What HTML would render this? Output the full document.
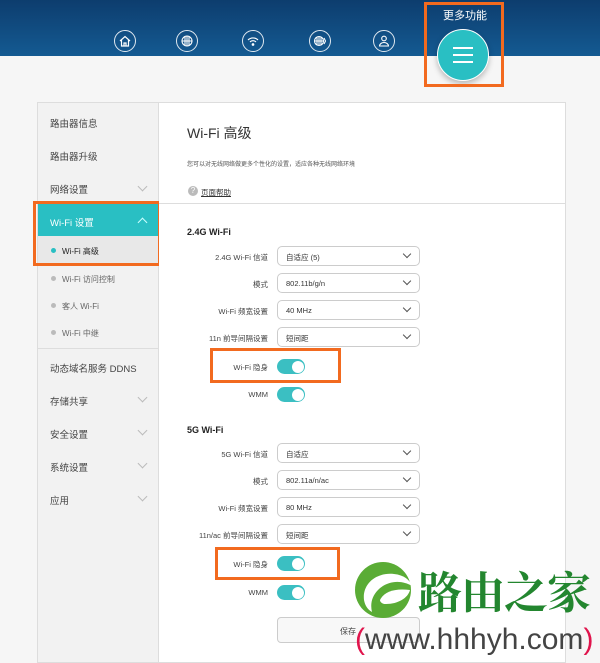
<!DOCTYPE html>
<html><head><meta charset="utf-8"><style>
*{margin:0;padding:0;box-sizing:border-box}
body{width:600px;height:663px;overflow:hidden;background:#f6f6f6;font-family:"Liberation Sans","Noto Sans CJK SC",sans-serif;position:relative;color:#333}
.hdr{position:absolute;left:0;top:0;width:600px;height:56px;background:linear-gradient(#0d3d6e,#145a92)}
.ic{position:absolute;top:30px;width:22px;height:22px;border:1.3px solid #dfe8f0;border-radius:50%}
.ic svg{position:absolute;left:3px;top:3px}
.more{position:absolute;left:443px;top:7px;color:#fff;font-size:11px}
.tc{position:absolute;left:437px;top:29px;width:52px;height:52px;border-radius:50%;background:#29bfc3;border:1.5px solid #fff;box-shadow:0 3px 6px rgba(0,0,0,.25)}
.tc i{position:absolute;left:15px;width:20px;height:2px;background:#fff}
.ob{position:absolute;border:3px solid #f26a1f}
.side{position:absolute;left:37px;top:102px;width:122px;height:561px;background:#f2f2f2;border:1px solid #ddd}
.main{position:absolute;left:159px;top:102px;width:407px;height:561px;background:#fff;border:1px solid #ddd;border-left:none}
.si{position:absolute;left:12px;font-size:9.5px;color:#444}
.chev{position:absolute;left:101px;width:7px;height:7px;border-right:1px solid #bbb;border-bottom:1px solid #bbb;transform:rotate(45deg)}
.sub{position:absolute;left:24px;font-size:8px;color:#666}
.dot{position:absolute;left:13px;width:5px;height:5px;border-radius:50%;background:#bbb}
.lab{position:absolute;right:332px;font-size:7.5px;color:#444;text-align:right;white-space:nowrap}
.sel{position:absolute;left:277px;width:143px;height:20px;border:1px solid #ccc;border-radius:5px;font-size:7.5px;padding:5px 0 0 8px;color:#333}
.sel:after{content:"";position:absolute;right:9px;top:4px;width:5px;height:5px;border-right:1px solid #555;border-bottom:1px solid #555;transform:rotate(45deg)}
.tg{position:absolute;left:277px;width:28px;height:15px;border-radius:8px;background:#3bbfc2}
.tg:after{content:"";position:absolute;right:1.5px;top:1.5px;width:12px;height:12px;border-radius:50%;background:#fff}
.h{position:absolute;left:187px;font-size:9px;font-weight:bold;color:#222}
</style></head><body>
<div class="hdr"></div>
<div class="ic" style="left:114px"><svg width="14" height="14" viewBox="0 0 14 14" fill="none" stroke="#fff" stroke-width="1.2"><path d="M2 7L7 2.5L12 7M3.5 6v6h7V6M6 12V9h2v3"/></svg></div>
<div class="ic" style="left:176px"><svg width="14" height="14" viewBox="0 0 14 14" fill="none" stroke="#fff" stroke-width="1.1"><circle cx="7" cy="7" r="5"/><path d="M2 7h10M7 2v10M5 2.5v9M9 2.5v9"/></svg></div>
<div class="ic" style="left:242px"><svg width="14" height="14" viewBox="0 0 14 14" fill="none" stroke="#fff" stroke-width="1.1"><path d="M2 6a7 7 0 0 1 10 0M4 8a4 4 0 0 1 6 0"/><circle cx="7" cy="10.5" r=".8" fill="#fff"/></svg></div>
<div class="ic" style="left:309px"><svg width="14" height="14" viewBox="0 0 14 14" fill="none" stroke="#fff" stroke-width="1.1"><circle cx="6" cy="7" r="4.5"/><path d="M1.5 7h9M6 2.5v9M4 3v8M8 3v8M11 4l1.5 3-1.5 3"/></svg></div>
<div class="ic" style="left:373px"><svg width="14" height="14" viewBox="0 0 14 14" fill="none" stroke="#fff" stroke-width="1.1"><circle cx="7" cy="4.5" r="2.3"/><path d="M2.5 12a4.5 3.5 0 0 1 9 0z"/></svg></div>
<div class="more">更多功能</div>
<div class="tc"><i style="top:17px"></i><i style="top:24px"></i><i style="top:31px"></i></div>
<div class="ob" style="left:424px;top:2px;width:80px;height:85px"></div>

<div class="side">
<div class="si" style="top:13px">路由器信息</div>
<div class="si" style="top:46px">路由器升级</div>
<div class="si" style="top:79px">网络设置</div><div class="chev" style="top:80px"></div>
<div style="position:absolute;left:0;top:100px;width:120px;height:33px;background:#29bfc3"></div>
<div class="si" style="top:112px;color:#fff">Wi-Fi 设置</div>
<div class="chev" style="top:116px;border-color:#cff;transform:rotate(225deg)"></div>
<div style="position:absolute;left:0;top:133px;width:120px;height:28px;background:#e8e8e8"></div>
<div class="dot" style="top:145px;background:#29bfc3"></div><div class="sub" style="top:143px;color:#222">Wi-Fi 高级</div>
<div class="dot" style="top:173px"></div><div class="sub" style="top:171px">Wi-Fi 访问控制</div>
<div class="dot" style="top:200px"></div><div class="sub" style="top:198px">客人 Wi-Fi</div>
<div class="dot" style="top:227px"></div><div class="sub" style="top:225px">Wi-Fi 中继</div>
<div style="position:absolute;left:0;top:245px;width:120px;height:1px;background:#ddd"></div>
<div class="si" style="top:258px">动态域名服务 DDNS</div>
<div class="si" style="top:291px">存储共享</div><div class="chev" style="top:291px"></div>
<div class="si" style="top:324px">安全设置</div><div class="chev" style="top:324px"></div>
<div class="si" style="top:357px">系统设置</div><div class="chev" style="top:357px"></div>
<div class="si" style="top:390px">应用</div><div class="chev" style="top:390px"></div>
</div>
<div class="ob" style="left:33px;top:201px;width:128px;height:65px"></div>

<div class="main"></div>
<div style="position:absolute;left:187px;top:123px;font-size:14px;color:#333">Wi-Fi 高级</div>
<div style="position:absolute;left:187px;top:159px;font-size:6px;color:#555">您可以对无线网络做更多个性化的设置，适应各种无线网络环境</div>
<div style="position:absolute;left:188px;top:186px;width:10px;height:10px;border-radius:50%;background:#bbb;color:#fff;font-size:8px;text-align:center;line-height:10px">?</div>
<div style="position:absolute;left:201px;top:187px;font-size:7.5px;color:#333;text-decoration:underline">页面帮助</div>
<div style="position:absolute;left:159px;top:203px;width:406px;height:1px;background:#ddd"></div>

<div class="h" style="top:227px">2.4G Wi-Fi</div>
<div class="lab" style="top:252px">2.4G Wi-Fi 信道</div><div class="sel" style="top:246px">自适应 (5)</div>
<div class="lab" style="top:279px">模式</div><div class="sel" style="top:273px">802.11b/g/n</div>
<div class="lab" style="top:306px">Wi-Fi 频宽设置</div><div class="sel" style="top:300px">40 MHz</div>
<div class="lab" style="top:333px">11n 前导间隔设置</div><div class="sel" style="top:327px">短间距</div>
<div class="lab" style="top:362px">Wi-Fi 隐身</div><div class="tg" style="top:359px"></div>
<div class="lab" style="top:390px">WMM</div><div class="tg" style="top:387px"></div>
<div class="ob" style="left:210px;top:348px;width:131px;height:35px"></div>

<div class="h" style="top:425px">5G Wi-Fi</div>
<div class="lab" style="top:449px">5G Wi-Fi 信道</div><div class="sel" style="top:443px">自适应</div>
<div class="lab" style="top:476px">模式</div><div class="sel" style="top:470px">802.11a/n/ac</div>
<div class="lab" style="top:503px">Wi-Fi 频宽设置</div><div class="sel" style="top:497px">80 MHz</div>
<div class="lab" style="top:530px">11n/ac 前导间隔设置</div><div class="sel" style="top:524px">短间距</div>
<div class="lab" style="top:559px">Wi-Fi 隐身</div><div class="tg" style="top:556px"></div>
<div class="lab" style="top:588px">WMM</div><div class="tg" style="top:585px"></div>
<div class="ob" style="left:215px;top:547px;width:125px;height:33px"></div>
<div style="position:absolute;left:277px;top:617px;width:143px;height:26px;border:1px solid #ccc;border-radius:4px;background:#f8f8f8;font-size:8px;color:#444;padding:8px 0 0 62px">保存</div>

<svg style="position:absolute;left:350px;top:560px" width="66" height="62" viewBox="0 0 66 62">
<circle cx="33" cy="30" r="28" fill="#5aac35"/>
<path d="M14 40C12 24 26 12 44 14C54 15 60 20 62 26C52 20 38 20 28 30C22 36 20 44 22 52C17 49 15 45 14 40Z" fill="#fff"/>
<path d="M30 40C34 32 44 28 60 30C58 38 48 44 36 44C32 44 30 42 30 40Z" fill="#fff"/>
</svg>
<div style="position:absolute;left:418px;top:565px;font-size:44px;line-height:48px;color:#23862f;font-family:'Noto Serif CJK SC','Noto Sans CJK SC',serif;font-weight:bold;letter-spacing:-1px">路由之家</div>
<div style="position:absolute;left:355px;top:620px;font-size:30px;line-height:40px;color:#444"><span style="color:#e0144c">(</span>www.hhhyh.com<span style="color:#e0144c">)</span></div>
</body></html>
